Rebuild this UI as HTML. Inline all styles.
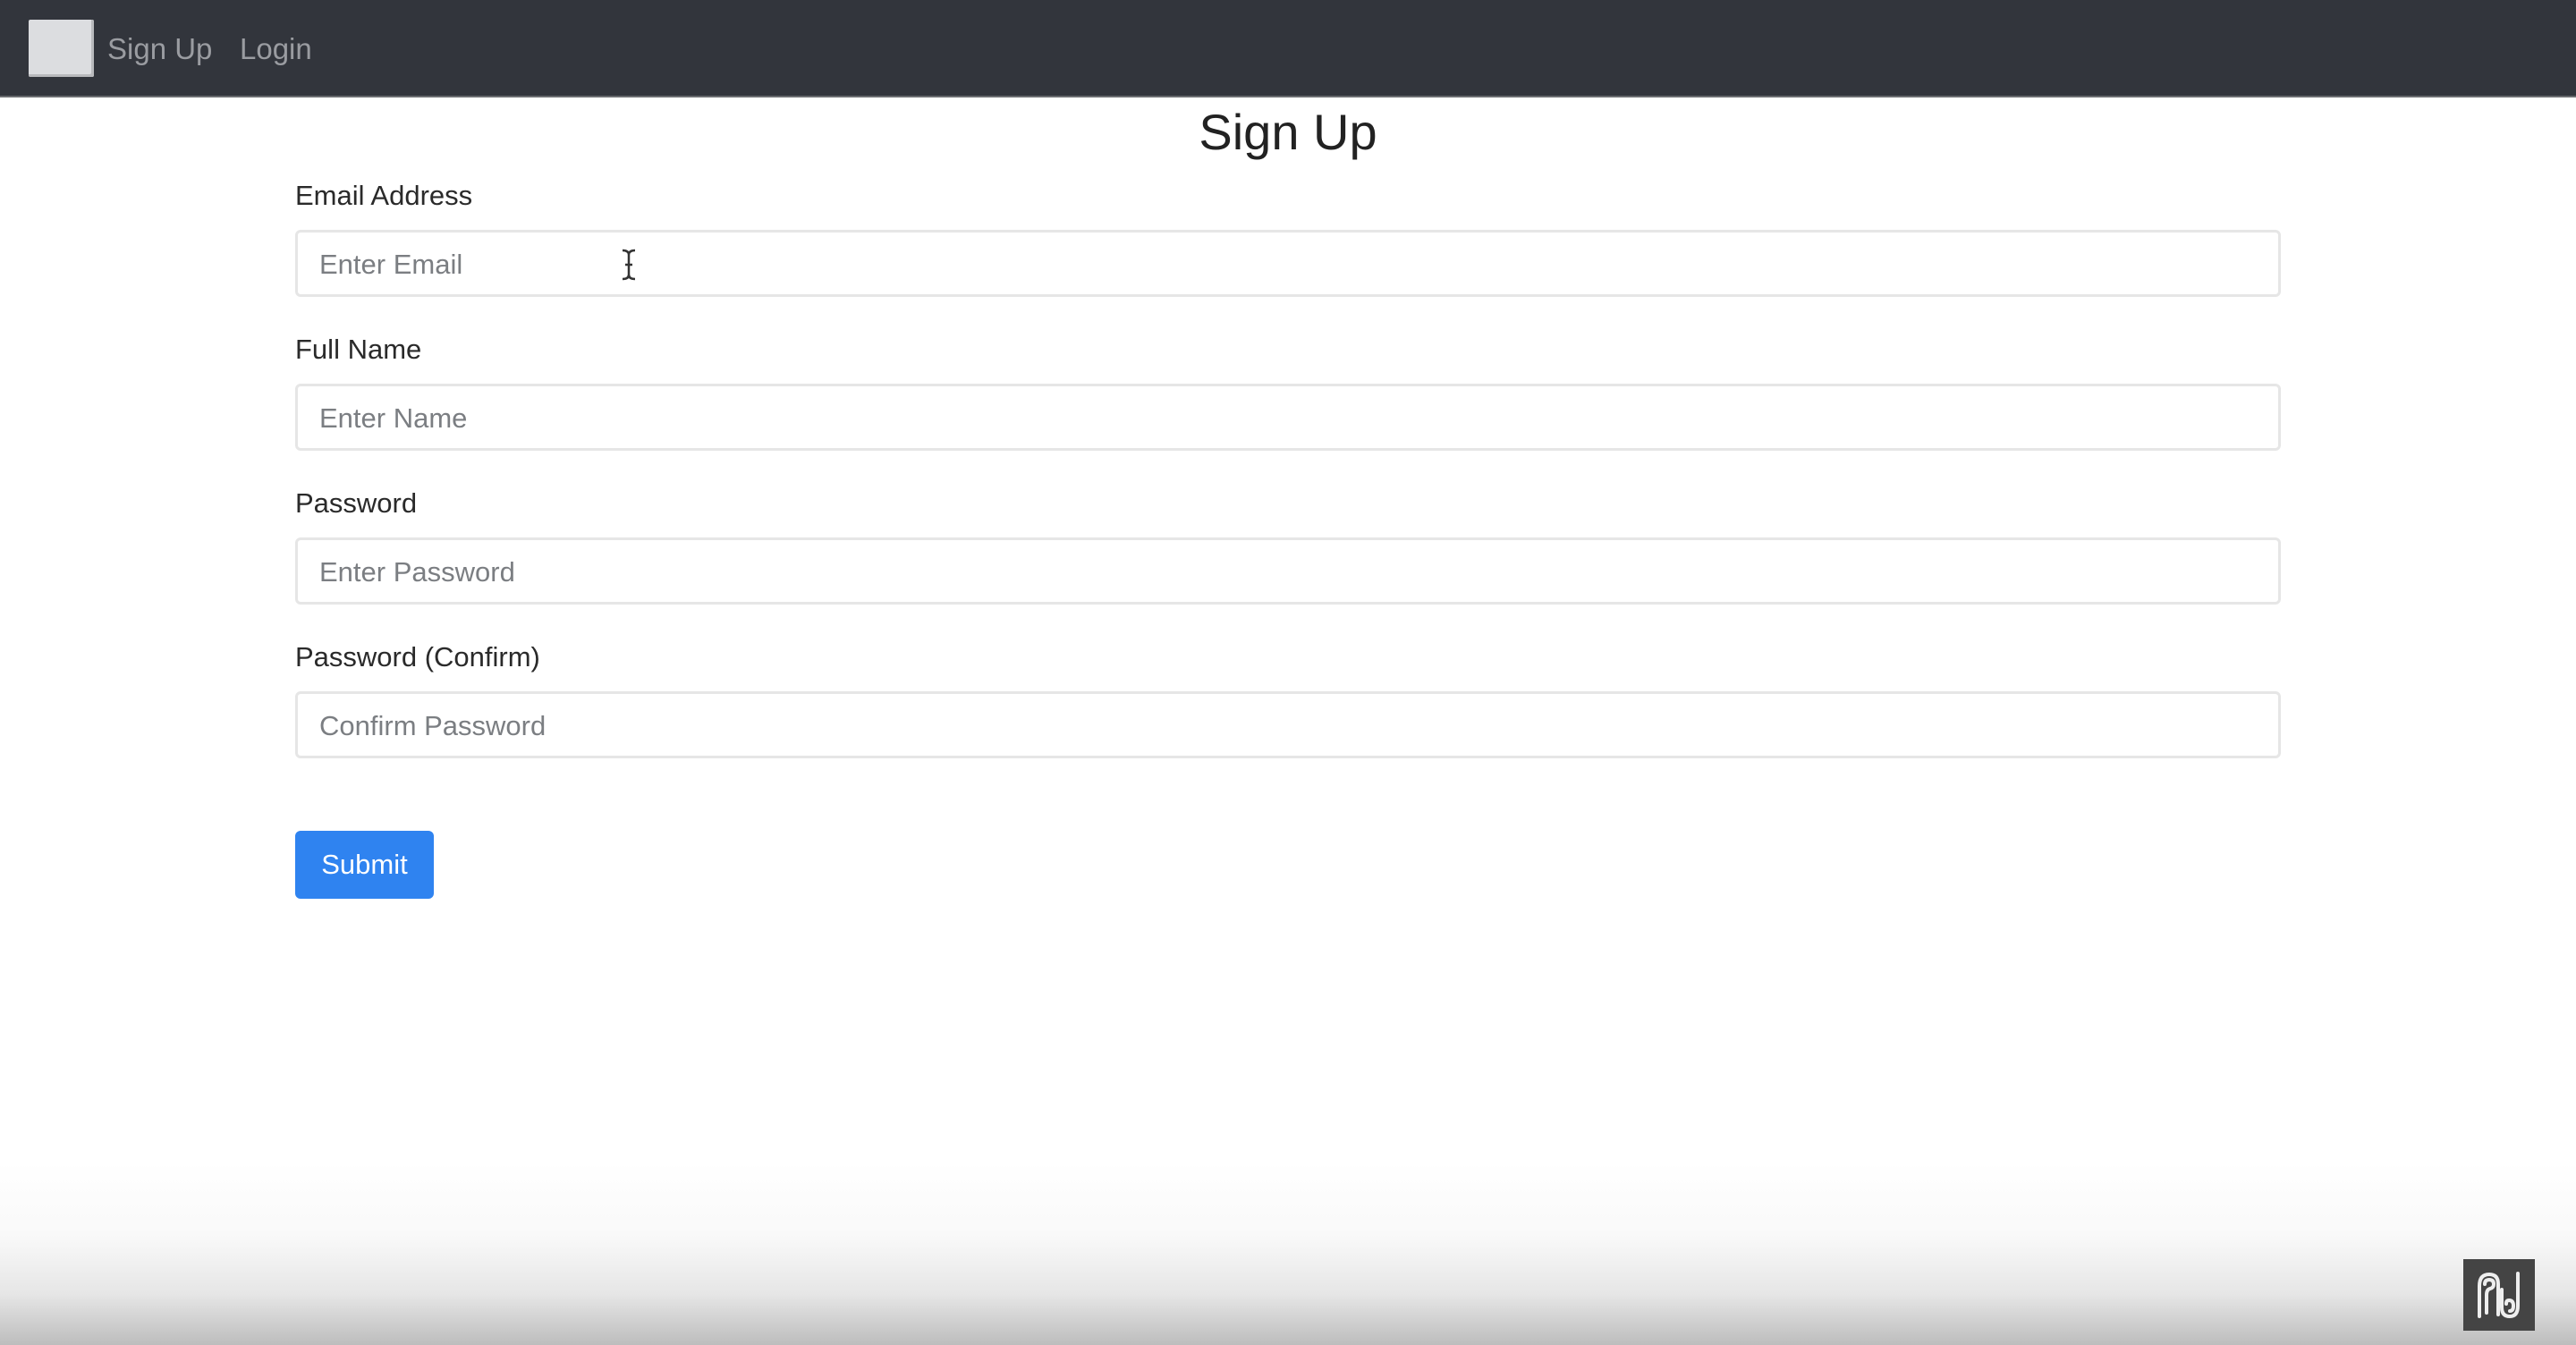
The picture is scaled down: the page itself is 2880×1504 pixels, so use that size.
<!DOCTYPE html>
<html><head><meta charset="utf-8">
<style>
*{box-sizing:border-box;margin:0;padding:0}
html,body{width:2880px;height:1504px;overflow:hidden}
body{position:relative;background:#fff;font-family:"Liberation Sans",Arial,sans-serif;color:#212529}
.nav{position:absolute;left:0;top:0;width:2880px;height:109px;background:#32353c;border-bottom:2px solid #6a6c70}
.logo{position:absolute;left:32px;top:22px;width:73px;height:64px;background:#dcdde0;border-radius:2px;box-shadow:inset -3px -3px 0 #b9babd}
.nl{position:absolute;top:36px;font-size:33px;color:#9a9ca1}
h1{position:absolute;left:0;width:2880px;top:115px;text-align:center;font-weight:normal;font-size:56px;color:#222}
.lab{position:absolute;left:330px;font-size:31px;color:#2a2a2a}
.inp{position:absolute;left:330px;width:2220px;height:75px;border:3px solid #e6e6e6;border-radius:6px;background:#fff}
.inp span{position:absolute;left:24px;top:18px;font-size:31px;color:#7b7e82}
.btn{position:absolute;left:330px;top:929px;width:155px;height:76px;background:#2f83f0;border-radius:6px;color:#fff;font-size:31px;text-align:center;line-height:76px}
.fade{position:absolute;left:0;top:1300px;width:2880px;height:204px;background:linear-gradient(#fff 0%,#f9f9f9 40%,#e6e6e6 72%,#bdbdbd 100%)}
.badge{position:absolute;left:2754px;top:1408px;width:80px;height:80px;background:#444}
</style></head><body>
<div class="nav">
<div class="logo"></div>
<div class="nl" style="left:120px">Sign Up</div>
<div class="nl" style="left:268px">Login</div>
</div>
<h1>Sign Up</h1>
<div class="lab" style="top:201px">Email Address</div>
<div class="inp" style="top:257px"><span>Enter Email</span>
<svg style="position:absolute;left:360px;top:18px" width="20" height="36" viewBox="0 0 20 36"><path d="M3 2 Q10 2 10 7 Q10 2 17 2 M10 7 V29 M3 34 Q10 34 10 29 Q10 34 17 34 M6 18 H14" stroke="#333" stroke-width="2.5" fill="none"/></svg>
</div>
<div class="lab" style="top:373px">Full Name</div>
<div class="inp" style="top:429px"><span>Enter Name</span></div>
<div class="lab" style="top:545px">Password</div>
<div class="inp" style="top:601px"><span>Enter Password</span></div>
<div class="lab" style="top:717px">Password (Confirm)</div>
<div class="inp" style="top:773px"><span>Confirm Password</span></div>
<div class="btn">Submit</div>
<div class="fade"></div>
<div class="badge">
<svg width="80" height="80" viewBox="0 0 80 80"><g stroke="#eee" stroke-width="4" fill="none" stroke-linecap="round">
<path d="M18 64 V30 Q18 17 29 17 Q39 17 39 28 V62"/>
<path d="M26 60 V40 Q26 34 30 33 Q34 32 34 28 Q34 23 29 23 Q24 23 24 28"/>
<path d="M61 16 V52 Q61 64 52 64 Q43 64 43 54 V34"/>
<path d="M52 58 Q56 58 56 52 Q56 46 51 46 Q48 46 48 50"/>
</g></svg>
</div>
</body></html>
